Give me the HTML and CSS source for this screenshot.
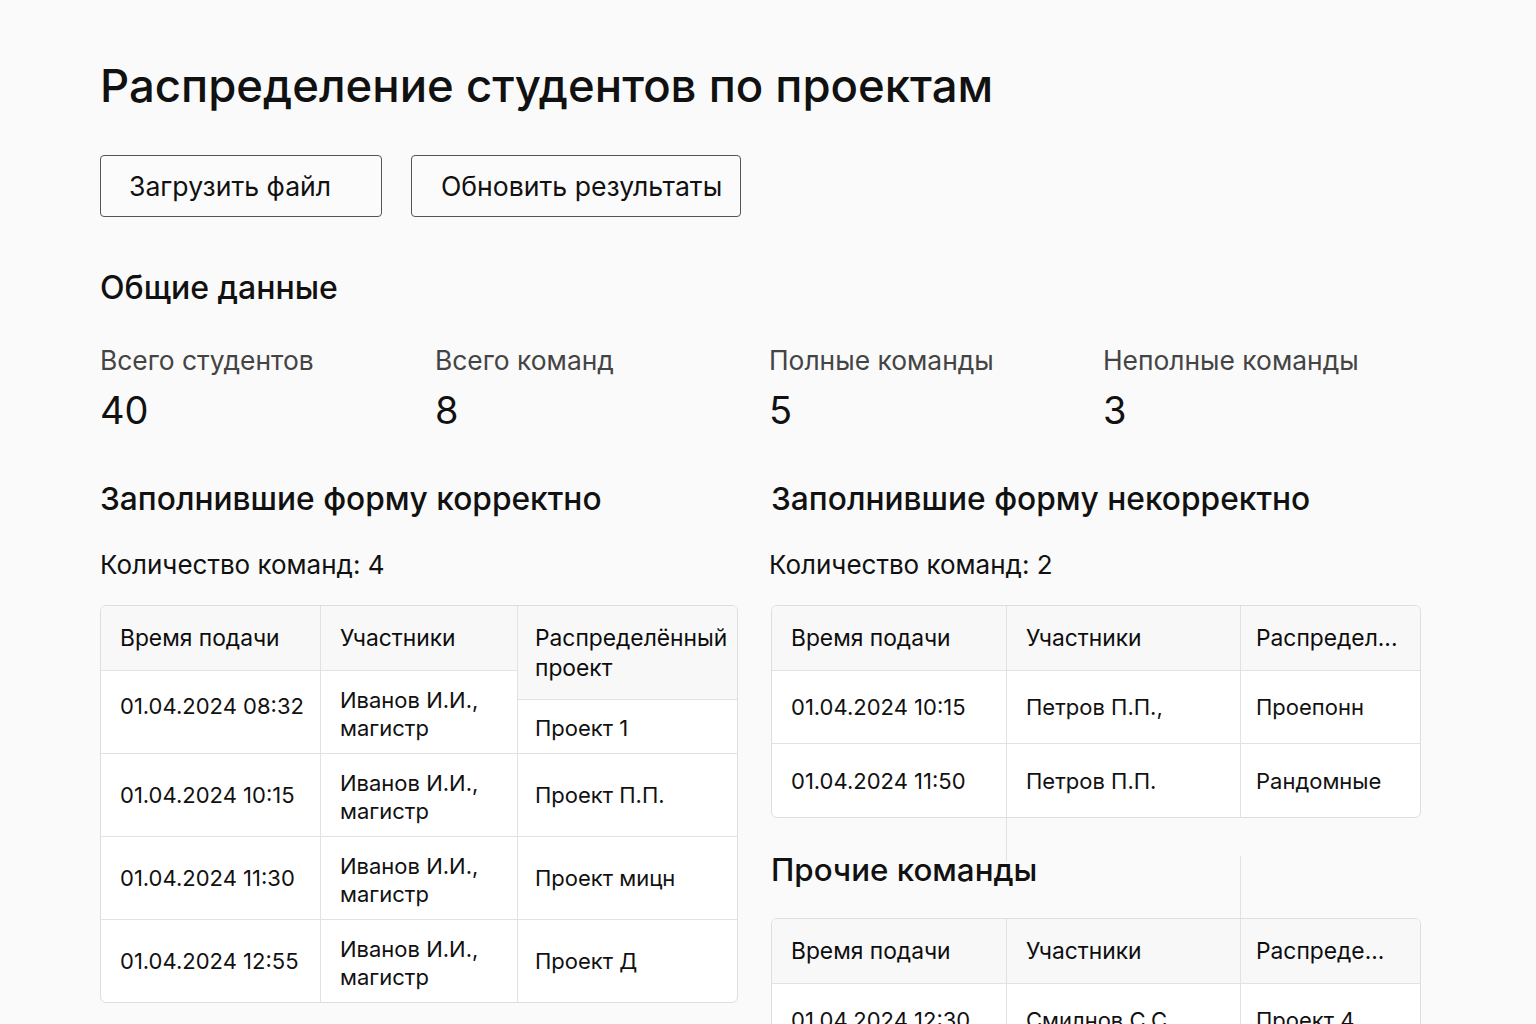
FILE: index.html
```html
<!DOCTYPE html>
<html lang="ru">
<head>
<meta charset="utf-8">
<title>Распределение студентов по проектам</title>
<link rel="stylesheet" href="styles.css">
</head>
<body>
<main class="page">
  <h1 class="title">Распределение студентов по проектам</h1>

  <div class="actions">
    <button class="btn btn-upload">Загрузить файл</button>
    <button class="btn btn-refresh">Обновить результаты</button>
  </div>

  <h2 class="section-title">Общие данные</h2>
  <div class="stats">
    <div class="stat"><div class="stat-label">Всего студентов</div><div class="stat-value">40</div></div>
    <div class="stat"><div class="stat-label">Всего команд</div><div class="stat-value">8</div></div>
    <div class="stat"><div class="stat-label">Полные команды</div><div class="stat-value">5</div></div>
    <div class="stat"><div class="stat-label">Неполные команды</div><div class="stat-value">3</div></div>
  </div>

  <div class="columns">
    <section class="col col-left">
      <h2 class="group-title">Заполнившие форму корректно</h2>
      <p class="count">Количество команд: 4</p>
      <div class="table table-left">
        <div class="cell head c1 r-head">Время подачи</div>
        <div class="cell head c2 r-head">Участники</div>
        <div class="cell head c3 head-tall">Распределённый<br>проект</div>
        <div class="cell c1 first-date">01.04.2024 08:32</div>
        <div class="cell c2 first-names">Иванов И.И.,<br>магистр</div>
        <div class="cell c3 first-proj">Проект 1</div>

        <div class="cell c1">01.04.2024 10:15</div>
        <div class="cell c2 names">Иванов И.И.,<br>магистр</div>
        <div class="cell c3">Проект П.П.</div>

        <div class="cell c1">01.04.2024 11:30</div>
        <div class="cell c2 names">Иванов И.И.,<br>магистр</div>
        <div class="cell c3">Проект мицн</div>

        <div class="cell c1 last">01.04.2024 12:55</div>
        <div class="cell c2 names last">Иванов И.И.,<br>магистр</div>
        <div class="cell c3 last">Проект Д</div>
      </div>
    </section>

    <section class="col col-right">
      <h2 class="group-title">Заполнившие форму некорректно</h2>
      <p class="count">Количество команд: 2</p>
      <div class="table table-right">
        <div class="cell head">Время подачи</div>
        <div class="cell head">Участники</div>
        <div class="cell head c3">Распредел...</div>
        <div class="cell">01.04.2024 10:15</div>
        <div class="cell">Петров П.П.,</div>
        <div class="cell c3">Проепонн</div>
        <div class="cell last">01.04.2024 11:50</div>
        <div class="cell last">Петров П.П.</div>
        <div class="cell c3 last">Рандомные</div>
      </div>

      <div class="other">
        <span class="ghost-line ghost-a"></span>
        <span class="ghost-line ghost-b"></span>
        <h2 class="other-title">Прочие команды</h2>
      </div>
      <div class="table table-right table-other">
        <div class="cell head">Время подачи</div>
        <div class="cell head">Участники</div>
        <div class="cell head c3">Распреде...</div>
        <div class="cell">01.04.2024 12:30</div>
        <div class="cell">Смилнов С.С.</div>
        <div class="cell c3">Проект 4</div>
      </div>
    </section>
  </div>
</main>
</body>
</html>
```

FILE: styles.css
```css
* { box-sizing: border-box; }

html, body {
  margin: 0;
  padding: 0;
  background: #fafafa;
  color: #111;
  font-family: Inter, Roboto, "Liberation Sans", Arial, sans-serif;
}

body { overflow: hidden; height: 1024px; }

.page {
  padding: 60px 0 0 100px;
  width: 1436px;
}

.title {
  margin: 0;
  font-size: 45.5px;
  line-height: 52px;
  font-weight: 500;
}

.actions {
  display: flex;
  gap: 29px;
  margin-top: 43px;
}

.btn {
  height: 62px;
  padding: 0 0 0 28px;
  font-family: inherit;
  font-size: 26.6px;
  color: #111;
  background: #fbfbfb;
  border: 1px solid #555;
  border-radius: 4px;
  text-align: left;
}
.btn-upload { width: 282px; }
.btn-refresh { width: 330px; padding-left: 29px; }

.section-title {
  margin: 51px 0 0;
  font-size: 32px;
  line-height: 40px;
  font-weight: 500;
}

.stats {
  display: grid;
  grid-template-columns: repeat(4, 334px);
  margin-top: 37px;
}
.stat:nth-child(n+2) { padding-left: 1px; }
.stat-label {
  font-size: 26.4px;
  line-height: 30px;
  color: #444;
}
.stat-value {
  margin-top: 12px;
  font-size: 38px;
  line-height: 46px;
}

.columns {
  display: grid;
  grid-template-columns: 638px 650px;
  gap: 33px;
  margin-top: 46px;
}

.group-title {
  margin: 0;
  font-size: 31.7px;
  line-height: 40px;
  font-weight: 500;
}

.count {
  margin: 31px 0 0;
  font-size: 26px;
  line-height: 30px;
}
.col-right .count { margin-left: -2px; }

.table {
  display: grid;
  margin-top: 25px;
  background: #fff;
  border: 1px solid #dedede;
  border-radius: 6px;
  overflow: hidden;
  font-size: 22px;
}

.cell {
  display: flex;
  align-items: center;
  padding-left: 19px;
  border-right: 1px solid #e2e2e2;
  border-bottom: 1px solid #e2e2e2;
  line-height: 28px;
  white-space: nowrap;
}
.cell.c3 { border-right: none; }
.cell.last { border-bottom: none; }
.cell.head { background: #f8f8f8; font-weight: 400; font-size: 22.8px; color: #0d0d0d; }

/* left table: tall project header spills into the first data row */
.table-left {
  grid-template-columns: 220px 197px 1fr;
  grid-template-rows: 65px 29px 54px 83px 83px 82px;
}
.table-left .cell.c3 { padding-left: 17px; }
.table-left .r-head { grid-row: 1; }
.table-left .head-tall {
  grid-column: 3;
  grid-row: 1 / span 2;
  align-items: flex-start;
  padding-top: 17px;
  line-height: 30px;
}
.table-left .first-date {
  grid-column: 1;
  grid-row: 2 / span 2;
  align-items: flex-start;
  padding-top: 21px;
}
.table-left .first-names {
  grid-column: 2;
  grid-row: 2 / span 2;
  align-items: flex-start;
  padding-top: 15px;
}
.table-left .first-proj {
  grid-column: 3;
  grid-row: 3;
  padding-top: 2px;
}
.table-left .names { padding-top: 4px; }

.table-right {
  grid-template-columns: 235px 234px 1fr;
  grid-template-rows: 65px 73px 73px;
}
.table-right .cell.c3 { padding-left: 15px; }

.other {
  position: relative;
  margin-top: 32px;
}
.other-title {
  margin: 0;
  font-size: 31.3px;
  line-height: 40px;
  font-weight: 500;
}
.ghost-line {
  position: absolute;
  width: 1px;
  background: #e2e2e2;
}
.ghost-a { left: 235px; top: -32px; height: 44px; }
.ghost-b { left: 469px; top: 6px; height: 62px; }

.table-other {
  margin-top: 28px;
  grid-template-rows: 65px 73px;
}
```
